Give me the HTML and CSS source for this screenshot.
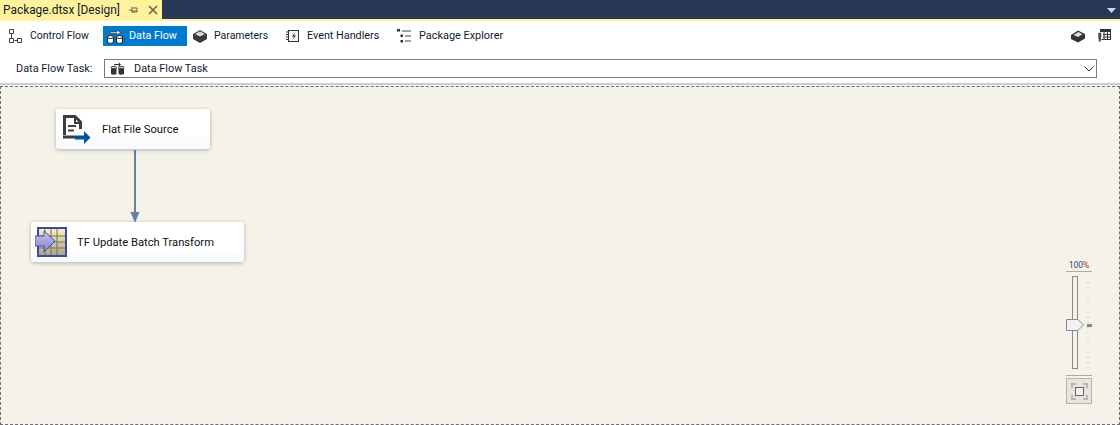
FILE: index.html
```html
<!DOCTYPE html>
<html lang="en">
<head>
<meta charset="utf-8">
<title>Package.dtsx [Design]</title>
<link rel="stylesheet" href="styles.css">
</head>
<body>
<div class="app">
  <div class="titlebar">
    <div class="tab">
      <span class="tab-name">Package.dtsx [Design]</span>
      <svg class="tab-pin" width="10" height="10" viewBox="0 0 10 10"><path d="M0 5H3M3 2V8M3 3H8V7H3M3 6H8" fill="none" stroke="#6b6548"/></svg>
      <svg class="tab-close" width="10" height="10" viewBox="0 0 10 10"><path d="M1 1L9 9M9 1L1 9" fill="none" stroke="#6b6548" stroke-width="1.6"/></svg>
    </div>
    <svg class="tab-menu" width="9" height="5" viewBox="0 0 9 5"><path d="M0 0H9L4.500 5Z" fill="#cfd6e6"/></svg>
  </div>
  <div class="tabline"></div>
  <div class="toolbar">
    <div class="tool tool-control">
      <svg class="tool-icon" width="15" height="16" viewBox="0 0 15 16"><path d="M1.500 1.500H5.500V5.500H1.500ZM1.500 10.500H5.500V14.500H1.500ZM9.500 10.500H13.500V14.500H9.500ZM3.500 6V10M6.500 12.500H9" fill="none" stroke="#3c3c3c"/></svg>
      <span>Control Flow</span>
    </div>
    <div class="tool tool-active">
      <svg class="tool-icon" width="18" height="18" viewBox="0 0 18 18"><g fill="#fff" stroke="#1e1e1e"><path d="M1.500 10V15.500Q4.500 17.500 7.500 15.500V10Z"/><ellipse cx="4.500" cy="10" rx="3" ry="1.500"/><path d="M10.500 10V15.500Q13.500 17.500 16.500 15.500V10Z"/><ellipse cx="13.500" cy="10" rx="3" ry="1.500"/></g><path d="M4 5H11V3L14.500 5.500L11 8V6.500H4Z" fill="#fff" stroke="#1e1e1e" stroke-width=".6"/></svg>
      <span>Data Flow</span>
    </div>
    <div class="tool tool-params">
      <svg class="tool-icon" width="16" height="16" viewBox="0 0 16 16"><path d="M1 6L8 2L15 6V11L8 15L1 11Z" fill="#3a3a3a"/><path d="M3 6L8 3.300L13 6L8 8.500Z" fill="#d8d8d8"/></svg>
      <span>Parameters</span>
    </div>
    <div class="tool tool-events">
      <svg class="tool-icon" width="14" height="14" viewBox="0 0 14 14"><rect x="2.500" y="1.500" width="10" height="11" fill="#f4f4f4" stroke="#333"/><path d="M0 3H3M0 5.500H3M0 8H3M0 10.500H3" stroke="#333"/><path d="M9 3L6 7.500H8L6.500 11L10 6.500H8Z" fill="#333"/></svg>
      <span>Event Handlers</span>
    </div>
    <div class="tool tool-explorer">
      <svg class="tool-icon" width="15" height="16" viewBox="0 0 15 16"><path d="M0 1H3V3.500H0ZM3.500 6.500H6V9H3.500ZM3.500 12H6V14.500H3.500Z" fill="#333"/><path d="M5 3H14M8 8H14M8 13H14" stroke="#444"/></svg>
      <span>Package Explorer</span>
    </div>
    <div class="tool-spacer"></div>
    <svg class="tool-end" width="16" height="14" viewBox="0 0 16 14"><path d="M1 6L8 1.500L15 5V9.500L8 13.500L1 10Z" fill="#333"/><path d="M3.500 6L8.500 3L12.500 5.200L8 8Z" fill="#ddd"/></svg>
    <svg class="tool-end" width="15" height="15" viewBox="0 0 15 15"><rect x="3.500" y="1.500" width="10" height="10" fill="none" stroke="#333"/><rect x="3" y="1" width="11" height="3" fill="#333"/><path d="M6 6.500H14M6 9H14M7 4V11.500M10.500 4V11.500" stroke="#333"/><path d="M1 4.500H4.500V9L3.800 14H1.800L1 9Z" fill="#444" stroke="#fff" stroke-width=".6"/></svg>
  </div>
  <div class="taskbar">
    <label class="task-label">Data Flow Task:</label>
    <div class="task-select">
      <svg class="task-icon" width="16" height="14" viewBox="0 0 16 14"><g fill="#333"><path d="M1 6V12Q3.500 13.500 6.500 12V6Q3.500 7 1 6ZM8.500 6V12Q11 13.500 14 12V6Q11 7 8.500 6Z"/></g><g fill="#ddd" stroke="#333"><ellipse cx="3.700" cy="5.500" rx="2.700" ry="1.200"/><ellipse cx="11.300" cy="5.500" rx="2.700" ry="1.200"/></g><path d="M4 2.500H10M8.500 .500L10.500 2.500L8.500 4.500" fill="none" stroke="#333"/></svg>
      <span>Data Flow Task</span>
      <svg class="task-chevron" width="10" height="6" viewBox="0 0 10 6"><path d="M.5 .5L5 5L9.500 .5" fill="none" stroke="#333"/></svg>
    </div>
  </div>
  <div class="canvas-top"></div>
  <div class="canvas">
    <div class="node node-source">
      <svg class="node-icon" width="30" height="30" viewBox="0 0 30 30"><path d="M3.500 21V2.500H14L19.500 8V15" fill="none" stroke="#3d3d3d" stroke-width="3"/><path d="M2 23H14" stroke="#3d3d3d" stroke-width="3"/><path d="M14 2V9H21" fill="none" stroke="#3d3d3d" stroke-width="2"/><path d="M7 12H15M7 16.500H13" stroke="#3d3d3d" stroke-width="2"/><path d="M14 21.500H23V17L29.500 23.500L23 30V25.500H14Z" fill="#00539c"/></svg>
      <span>Flat File Source</span>
    </div>
    <svg class="flow" width="12" height="74" viewBox="0 0 12 74"><path d="M6 0V63" stroke="#6580a8" stroke-width="2"/><path d="M1.500 62H10.500L6 73Z" fill="#6580a8"/></svg>
    <div class="node node-transform">
      <svg class="node-icon" width="32" height="32" viewBox="0 0 32 32"><defs><linearGradient id="grid" x1="0" y1="0" x2="0" y2="1"><stop offset="0" stop-color="#f6f0c2"/><stop offset="1" stop-color="#a9a78c"/></linearGradient><linearGradient id="arrow" x1="0" y1="0" x2="0" y2="1"><stop offset="0" stop-color="#c6c8f0"/><stop offset="1" stop-color="#7e82c8"/></linearGradient></defs><rect x="2" y="1" width="30" height="30" fill="#3f4a94"/><rect x="4" y="3" width="26" height="26" fill="url(#grid)"/><path d="M4 10H30M4 16H30M4 22H30M10 3V29M16 3V29M22 3V29" stroke="#77745a"/><path d="M0 10H9V5L20 15L9 26V20H0Z" fill="url(#arrow)" stroke="#4a4f9c"/></svg>
      <span>TF Update Batch Transform</span>
    </div>
    <div class="zoom">
      <div class="zoom-label">100<span class="zoom-pct">%</span></div>
      <div class="zoom-rule"></div>
      <div class="zoom-track">
        <div class="zoom-ticks"></div>
        <svg class="zoom-thumb" width="19" height="12" viewBox="0 0 19 12"><path d="M.5 .5H12L17.500 6L12 11.500H.5Z" fill="#f1f1f1" stroke="#8a8a8a"/></svg>
        <div class="zoom-mark"></div>
      </div>
      <div class="zoom-rule"></div>
      <div class="zoom-fit">
        <svg width="17" height="17" viewBox="0 0 17 17"><path d="M1 5V1H5M12 1H16V5M16 12V16H12M5 16H1V12" fill="none" stroke="#b9b9b4" stroke-width="2"/><rect x="4.500" y="4.500" width="8" height="8" fill="#f4f2ea" stroke="#666"/></svg>
      </div>
    </div>
  </div>
</div>
</body>
</html>
```
FILE: styles.css
```css
* { box-sizing: border-box; }
html, body { margin: 0; padding: 0; }
body { width: 1120px; height: 425px; overflow: hidden; background: #fff; font-family: Roboto, "Liberation Sans", sans-serif; font-size: 10.800px; color: #1e1e1e; }
.app { display: flex; flex-direction: column; height: 425px; }

.titlebar { height: 19px; flex: none; background: #293955; display: flex; align-items: center; justify-content: space-between; }
.tab { width: 162px; height: 19px; background: #fff29d; display: flex; align-items: center; padding-left: 3px; }
.tab-name { font-size: 11.900px; color: #0e1b2e; white-space: nowrap; width: 126px; }
.tab-close { margin-left: 9px; }
.tab-menu { margin-right: 4px; margin-top: 1px; }
.tabline { height: 2px; flex: none; background: #fff29d; }

.toolbar { height: 29px; flex: none; display: flex; align-items: center; padding: 0 8px 0 8px; }
.tool { display: flex; align-items: center; height: 20px; white-space: nowrap; color: #0e1b2e; }
.tool-icon { flex: none; margin-right: 7px; }
.tool-control { width: 95px; font-size: 10.500px; }
.tool-active { background: #007acc; color: #fff; width: 84px; padding-left: 3px; }
.tool-active .tool-icon { margin-right: 5px; }
.tool-params { width: 94px; margin-left: 5px; font-size: 10.500px; }
.tool-params .tool-icon { margin-right: 6px; }
.tool-events { width: 111px; }
.tool-explorer { margin-left: 0; font-size: 10.900px; }
.tool-spacer { flex: 1; }
.tool-end { margin-left: 11px; }

.taskbar { height: 33px; flex: none; display: flex; align-items: center; padding: 4px 23px 0 16px; font-size: 10.900px; }
.task-label { width: 88px; white-space: nowrap; color: #0e1b2e; }
.task-select { flex: 1; height: 19px; border: 1px solid #7a7a7a; display: flex; align-items: center; padding: 0 2px 0 5px; color: #0e1b2e; }
.task-icon { margin-right: 8px; }
.task-select span { flex: 1; }

.canvas-top { height: 3px; flex: none; background: linear-gradient(#c8ccd4 66%, #f5f5f5 66%); }
.canvas { flex: 1; position: relative; background: #f5f2e9; border: 1px dashed #6f6f6f; }

.node { position: absolute; display: flex; align-items: center; height: 40px; background: linear-gradient(#fff 60%, #f6f9ff); border-radius: 3px; box-shadow: 0 1px 4px rgba(0,0,0,.28); font-size: 11.200px; color: #111; white-space: nowrap; }
.node-source { left: 55px; top: 22px; width: 154px; padding-left: 5px; }
.node-source .node-icon { margin-right: 11px; }
.node-transform { left: 30px; top: 135px; width: 213px; padding-left: 4px; }
.node-transform .node-icon { margin-right: 10px; }
.flow { position: absolute; left: 128px; top: 63px; }

.zoom { position: absolute; left: 1065px; top: 173px; width: 26px; display: flex; flex-direction: column; }
.zoom-label { font-size: 8.500px; text-align: center; color: #2f4a80; line-height: 11px; }
.zoom-pct { color: #a33; }
.zoom-rule { height: 1px; background: #aaa; }
.zoom-track { position: relative; height: 103px; }
.zoom-track::before { content: ""; position: absolute; left: 6px; top: 4px; bottom: 6px; width: 4px; background: #f4f2ea; border: 1px solid #8a8a8a; }
.zoom-ticks { position: absolute; left: 20px; top: 5px; bottom: 5px; width: 4px; background: repeating-linear-gradient(#e6e3da 0 1px, transparent 1px 5px); }
.zoom-thumb { position: absolute; left: 0; top: 47px; }
.zoom-mark { position: absolute; left: 21px; top: 52px; width: 5px; height: 3px; background: #888; }
.zoom-fit { width: 26px; height: 26px; margin-top: 2px; border: 1px solid #b4b4b0; background: #e6e4dc; display: flex; align-items: center; justify-content: center; }
```
